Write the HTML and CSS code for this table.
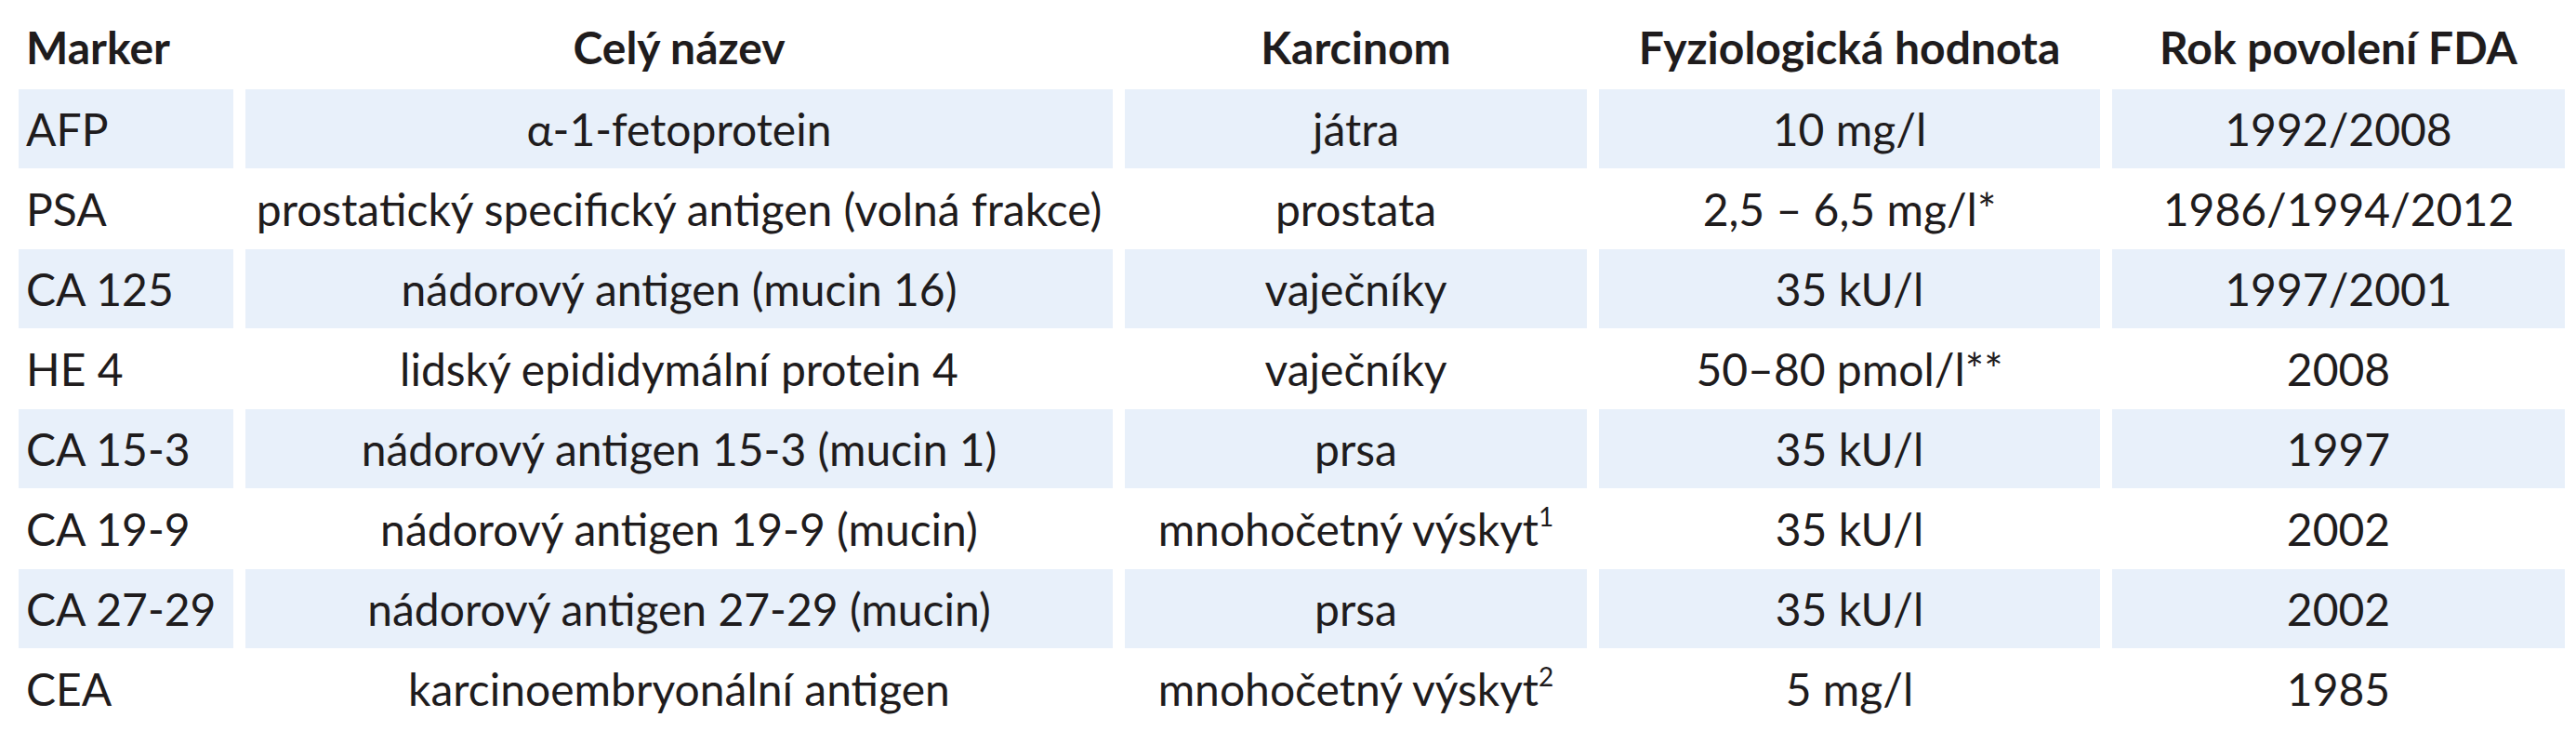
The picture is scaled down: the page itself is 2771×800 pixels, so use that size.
FILE: index.html
```html
<!DOCTYPE html>
<html lang="cs">
<head>
<meta charset="utf-8">
<title>Nádorové markery</title>
<link rel="stylesheet" href="styles.css">
</head>
<body>
<div class="table">
  <div class="cell head left">Marker</div>
  <div class="cell head">Celý název</div>
  <div class="cell head">Karcinom</div>
  <div class="cell head">Fyziologická hodnota</div>
  <div class="cell head">Rok povolení FDA</div>

  <div class="cell shade left">AFP</div>
  <div class="cell shade">α-1-fetoprotein</div>
  <div class="cell shade">játra</div>
  <div class="cell shade">10 mg/l</div>
  <div class="cell shade">1992/2008</div>

  <div class="cell left">PSA</div>
  <div class="cell">prostatický specifický antigen (volná frakce)</div>
  <div class="cell">prostata</div>
  <div class="cell">2,5 – 6,5 mg/l*</div>
  <div class="cell">1986/1994/2012</div>

  <div class="cell shade left">CA 125</div>
  <div class="cell shade">nádorový antigen (mucin 16)</div>
  <div class="cell shade">vaječníky</div>
  <div class="cell shade">35 kU/l</div>
  <div class="cell shade">1997/2001</div>

  <div class="cell left">HE 4</div>
  <div class="cell">lidský epididymální protein 4</div>
  <div class="cell">vaječníky</div>
  <div class="cell">50–80 pmol/l**</div>
  <div class="cell">2008</div>

  <div class="cell shade left">CA 15-3</div>
  <div class="cell shade">nádorový antigen 15-3 (mucin 1)</div>
  <div class="cell shade">prsa</div>
  <div class="cell shade">35 kU/l</div>
  <div class="cell shade">1997</div>

  <div class="cell left">CA 19-9</div>
  <div class="cell">nádorový antigen 19-9 (mucin)</div>
  <div class="cell">mnohočetný výskyt<sup>1</sup></div>
  <div class="cell">35 kU/l</div>
  <div class="cell">2002</div>

  <div class="cell shade left">CA 27-29</div>
  <div class="cell shade">nádorový antigen 27-29 (mucin)</div>
  <div class="cell shade">prsa</div>
  <div class="cell shade">35 kU/l</div>
  <div class="cell shade">2002</div>

  <div class="cell left">CEA</div>
  <div class="cell">karcinoembryonální antigen</div>
  <div class="cell">mnohočetný výskyt<sup>2</sup></div>
  <div class="cell">5 mg/l</div>
  <div class="cell">1985</div>
</div>
</body>
</html>
```

FILE: styles.css
```css
html, body {
  margin: 0;
  padding: 0;
  background: #ffffff;
}

body {
  font-family: Lato, "Liberation Sans", sans-serif;
  color: #1f1c1d;
}

.table {
  display: grid;
  grid-template-columns: 231px 933px 497px 539px 487px;
  grid-template-rows: 95px;
  grid-auto-rows: 85px;
  column-gap: 13px;
  row-gap: 1px;
  margin-left: 20px;
}

.cell {
  display: flex;
  align-items: center;
  justify-content: center;
  font-size: 48px;
  white-space: nowrap;
  padding: 0 8px;
}

.head {
  font-weight: 700;
  padding-top: 5px;
}

.left {
  justify-content: flex-start;
}

.shade {
  background: #e8f0fa;
}

sup {
  font-size: 28px;
  line-height: 0;
  position: relative;
  top: -14px;
  vertical-align: baseline;
}
```
